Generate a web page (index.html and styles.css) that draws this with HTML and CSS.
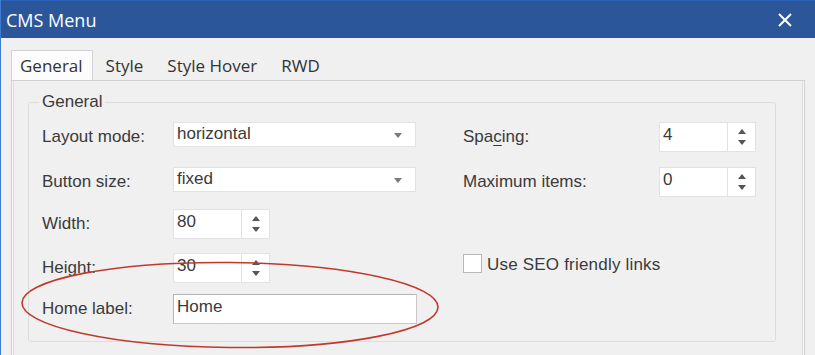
FILE: index.html
```html
<!DOCTYPE html>
<html>
<head>
<meta charset="utf-8">
<link rel="stylesheet" href="styles.css">
</head>
<body>
<div class="window">
  <div class="titlebar">
    <span class="title">CMS Menu</span>
    <svg class="close" width="16" height="16" viewBox="0 0 16 16"><path d="M2 2 L14 14 M14 2 L2 14" stroke="#fff" stroke-width="2" fill="none"/></svg>
  </div>
  <div class="tabs">
    <div class="tab active">General</div>
    <div class="tab">Style</div>
    <div class="tab">Style Hover</div>
    <div class="tab">RWD</div>
  </div>
  <div class="panel">
    <fieldset class="group">
      <legend>General</legend>
      <div class="grid">
        <label class="lbl">Layout mode:</label>
        <div class="select"><span>horizontal</span><svg width="8" height="5" viewBox="0 0 8 5"><path d="M0 0 H8 L4 5 Z" fill="#7a7a7a"/></svg></div>
        <label class="lbl">Spa<u>c</u>ing:</label>
        <div class="spin"><span class="val">4</span><span class="btns"><svg width="8" height="5" viewBox="0 0 8 5"><path d="M0 5 H8 L4 0 Z" fill="#555"/></svg><svg width="8" height="5" viewBox="0 0 8 5"><path d="M0 0 H8 L4 5 Z" fill="#555"/></svg></span></div>

        <label class="lbl">Button size:</label>
        <div class="select"><span>fixed</span><svg width="8" height="5" viewBox="0 0 8 5"><path d="M0 0 H8 L4 5 Z" fill="#7a7a7a"/></svg></div>
        <label class="lbl">Maximum items:</label>
        <div class="spin"><span class="val">0</span><span class="btns"><svg width="8" height="5" viewBox="0 0 8 5"><path d="M0 5 H8 L4 0 Z" fill="#555"/></svg><svg width="8" height="5" viewBox="0 0 8 5"><path d="M0 0 H8 L4 5 Z" fill="#555"/></svg></span></div>

        <label class="lbl">Width:</label>
        <div class="spin"><span class="val">80</span><span class="btns"><svg width="8" height="5" viewBox="0 0 8 5"><path d="M0 5 H8 L4 0 Z" fill="#555"/></svg><svg width="8" height="5" viewBox="0 0 8 5"><path d="M0 0 H8 L4 5 Z" fill="#555"/></svg></span></div>
        <div class="empty"></div>
        <div class="empty"></div>

        <label class="lbl">Height:</label>
        <div class="spin"><span class="val">30</span><span class="btns"><svg width="8" height="5" viewBox="0 0 8 5"><path d="M0 5 H8 L4 0 Z" fill="#555"/></svg><svg width="8" height="5" viewBox="0 0 8 5"><path d="M0 0 H8 L4 5 Z" fill="#555"/></svg></span></div>
        <div class="check-row"><span class="box"></span><span class="check-text">Use SEO friendly links</span></div>

        <label class="lbl">Home label:</label>
        <div class="text-input">Home</div>
      </div>
    </fieldset>
  </div>
  <svg class="mark" width="815" height="355" viewBox="0 0 815 355">
    <ellipse cx="230" cy="305" rx="208" ry="42.5" transform="rotate(0.6 230 305)" fill="none" stroke="#c0392b" stroke-width="1.6"/>
  </svg>
</div>
</body>
</html>
```
FILE: styles.css
```css
html, body {
  margin: 0;
  padding: 0;
  background: #f0f0f0;
}
.window {
  position: relative;
  width: 815px;
  height: 355px;
  box-sizing: border-box;
  border-left: 1px solid #3d7cd0;
  overflow: hidden;
  background: #f0f0f0;
}
.titlebar {
  height: 38px;
  background: #2b579a;
  border-top: 1px solid #2a62b8;
  box-sizing: border-box;
  display: flex;
  align-items: center;
  justify-content: space-between;
  padding: 0 22px 0 5px;
}
.title {
  font-family: "Open Sans", "Noto Sans", sans-serif;
  font-size: 18px;
  color: #fff;
  line-height: 24px;
}
.close {
  display: block;
  margin-top: 1px;
}
.tabs {
  display: flex;
  margin: 12px 0 0 10px;
  position: relative;
  z-index: 1;
}
.tab {
  font-family: "Open Sans", "Noto Sans", sans-serif;
  font-size: 17px;
  color: #333;
  line-height: 29px;
  height: 29px;
  padding: 0 11px;
  border: 1px solid transparent;
  border-bottom: none;
}
.tab.active {
  background: #fcfcfc;
  border-color: #d2d2d2;
  padding: 0 9px 0 8px;
  margin-right: 1px;
}
.panel {
  margin-left: 10px;
  width: 794px;
  box-sizing: border-box;
  border: 1px solid #d0d0d0;
  box-shadow: inset 1px 0 0 #fafafa, inset 2px 0 0 #dcdcdc, inset -1px 0 0 #fafafa, inset -2px 0 0 #dcdcdc;
  padding: 11px 16px 60px 16px;
}
.group {
  width: 748px;
  box-sizing: border-box;
  margin: 0;
  border: 1px solid #dcdcdc;
  border-radius: 3px;
  padding: 10px 13px 17px 13px;
  font-family: "Liberation Sans", Arial, sans-serif;
  font-size: 17px;
  color: #3a3a3a;
}
.group legend {
  padding: 0 3px;
  margin-left: -3px;
  line-height: 20px;
}
.grid {
  display: grid;
  grid-template-columns: 131px 290px 196px 98px;
  grid-template-rows: 45px 42px 44px 41px 30px;
  align-items: start;
}
.lbl {
  line-height: 30px;
  height: 30px;
  white-space: nowrap;
}
.lbl u {
  text-decoration-thickness: 1px;
  text-underline-offset: 3px;
}
.select {
  width: 243px;
  height: 25px;
  box-sizing: border-box;
  background: #fff;
  border: 1px solid #e2e2e2;
  display: flex;
  align-items: center;
  justify-content: space-between;
  padding: 0 13px 1px 3px;
}
.select span {
  line-height: 22px;
}
.select svg {
  display: block;
  margin-top: 2px;
}
.spin {
  width: 97px;
  height: 30px;
  box-sizing: border-box;
  display: flex;
  background: #fff;
  border: 1px solid #e2e2e2;
}
.spin .val {
  flex: 1;
  padding: 0 0 4px 3px;
  line-height: 24px;
  border-right: 1px solid #e2e2e2;
}
.spin .btns {
  width: 27px;
  display: flex;
  flex-direction: column;
  align-items: center;
  justify-content: space-between;
  padding: 6px 0 6px;
  box-sizing: border-box;
}
.spin .btns svg {
  display: block;
}
.check-row {
  grid-column: 3 / 5;
  display: flex;
  align-items: flex-start;
  padding-top: 1px;
}
.box {
  width: 19px;
  height: 19px;
  box-sizing: border-box;
  background: #fff;
  border: 1px solid #b8b8b8;
  margin-right: 5px;
}
.check-text {
  line-height: 22px;
  letter-spacing: 0.2px;
}
.text-input {
  width: 244px;
  height: 30px;
  box-sizing: border-box;
  background: #fff;
  border: 1px solid #b5b5b5;
  border-bottom-color: #c8c8c8;
  border-right-color: #c8c8c8;
  padding: 0 0 4px 3px;
  line-height: 24px;
}
.mark {
  position: absolute;
  left: -1px;
  top: 0;
  pointer-events: none;
}
```
